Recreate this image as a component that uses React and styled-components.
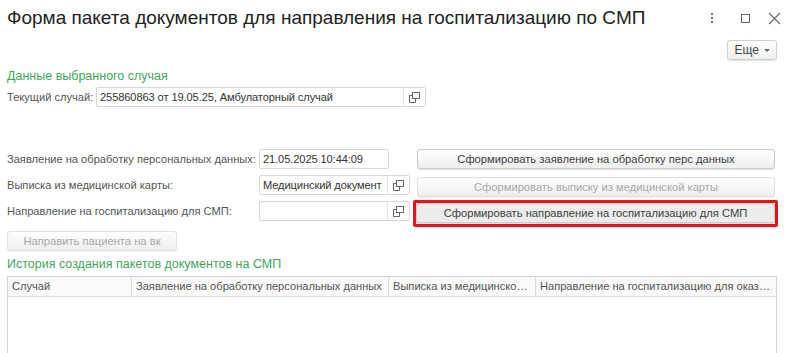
import React from 'react'
import styled, { createGlobalStyle } from 'styled-components'

const GlobalStyle = createGlobalStyle`
  html, body {
    margin: 0;
    padding: 0;
    background: #fff;
  }
  body {
    font-family: "Liberation Sans", Arial, sans-serif;
    font-size: 11.1px;
    color: #404040;
  }
`;

const Page = styled.div`
  width: 793px;
  height: 353px;
  overflow: hidden;
  box-sizing: border-box;
  padding: 0 16px 0 7px;
`;

const TitleBar = styled.div`
  display: flex;
  align-items: center;
  height: 36px;
`;

const Title = styled.h1`
  flex: 1;
  margin: 0;
  font-weight: normal;
  font-size: 19px;
  color: #222;
  white-space: nowrap;
`;

const WindowControls = styled.div`
  display: flex;
  align-items: center;
  color: #555;
  margin-right: -4px;
`;

const Ctrl = styled.span`
  display: flex;
  margin-left: ${p => p.$ml || 0}px;
`;

const CmdBar = styled.div`
  display: flex;
  justify-content: flex-end;
  height: 24px;
  align-items: flex-end;
`;

const MoreButton = styled.button`
  font-family: inherit;
  font-size: 12px;
  color: #444;
  height: 20px;
  padding: 0 6px 0 7px;
  border: 1px solid #cfcfcf;
  border-radius: 3px;
  background: linear-gradient(#fff, #efefef);
  box-shadow: 0 1px 1px rgba(0,0,0,0.12);
  display: flex;
  align-items: center;
  gap: 5px;
`;

const Caret = styled.span`
  width: 0;
  height: 0;
  border-left: 3px solid transparent;
  border-right: 3px solid transparent;
  border-top: 3px solid #666;
`;

const GroupTitle = styled.div`
  color: #3ea85a;
  font-size: 12.5px;
  margin-top: ${p => p.$top || 0}px;
  line-height: 18px;
`;

const FieldRow = styled.div`
  display: flex;
  align-items: center;
  height: 20px;
  margin-top: ${p => p.$top || 2}px;
`;

const Label = styled.span`
  color: #555;
  white-space: nowrap;
  width: ${p => (p.$w ? `${p.$w}px` : 'auto')};
  line-height: 20px;
`;

const Input = styled.div`
  box-sizing: border-box;
  height: 20px;
  width: ${p => p.$w}px;
  border: 1px solid #d8d8d8;
  border-radius: 2px;
  display: flex;
  align-items: stretch;
  background: #fff;
`;

const InputText = styled.span`
  flex: 1;
  padding: 0 3px;
  color: #333;
  letter-spacing: -0.1px;
  white-space: nowrap;
  overflow: hidden;
  line-height: 18px;
`;

const OpenBtn = styled.span`
  width: 21px;
  flex: none;
  border-left: 1px solid #e2e2e2;
  display: flex;
  align-items: center;
  justify-content: center;
`;

const Grid = styled.div`
  display: grid;
  grid-template-columns: 252px 158px 358px;
  grid-auto-rows: 20px;
  row-gap: 6px;
  margin-top: 42px;
  align-items: start;
`;

const Cmd = styled.button`
  box-sizing: border-box;
  font-family: inherit;
  font-size: 11.2px;
  height: 20px;
  width: ${p => (p.$w ? `${p.$w}px` : '100%')};
  border: 1px solid ${p => (p.$disabled ? '#e0e0e0' : '#cdcdcd')};
  border-radius: 3px;
  color: ${p => (p.$disabled ? '#a8a8a8' : '#404040')};
  background: ${p => (p.$pressed ? '#ececec' : 'linear-gradient(#fff, #eeeeee)')};
  box-shadow: 0 1px 1px rgba(0,0,0,${p => (p.$disabled ? 0.06 : 0.14)});
  padding: 0;
  white-space: nowrap;
  margin-top: ${p => p.$top || 0}px;
`;

const Highlight = styled.div`
  margin: -1px -3px 0 -4px;
  height: 21px;
  border: 3px solid #e8131b;
  border-radius: 2px;
  display: flex;
`;

const Table = styled.div`
  margin-top: 3px;
  border: 1px solid #d5d5d5;
  height: 100px;
  width: 770px;
  box-sizing: border-box;
`;

const HeadRow = styled.div`
  display: grid;
  grid-template-columns: 123px 257px 147px 1fr;
  height: 19px;
  border-bottom: 1px solid #dcdcdc;
  background: #f9f9f9;
`;

const HeadCell = styled.div`
  padding: 0 4px;
  line-height: 19px;
  color: #555;
  white-space: nowrap;
  overflow: hidden;
  text-overflow: ellipsis;
  border-left: ${p => (p.$first ? 'none' : '1px solid #dcdcdc')};
`;

const OpenIcon = () => (
  <svg width="11" height="11" viewBox="0 0 11 11" fill="none" stroke="#666" strokeWidth="1">
    <rect x="3.5" y="0.5" width="7" height="6" />
    <path d="M3.5 3.5H0.5V10.5H6.5V6.5" />
  </svg>
);

function App() {
  return (
    <Page>
      <GlobalStyle />
      <TitleBar>
        <Title>Форма пакета документов для направления на госпитализацию по СМП</Title>
        <WindowControls>
          <Ctrl>
            <svg width="4" height="12" viewBox="0 0 4 12">
              <circle cx="2" cy="2" r="1.2" fill="#777" />
              <circle cx="2" cy="6" r="1.2" fill="#777" />
              <circle cx="2" cy="10" r="1.2" fill="#777" />
            </svg>
          </Ctrl>
          <Ctrl $ml={26}>
            <svg width="11" height="11" viewBox="0 0 11 11">
              <rect x="1.5" y="1.5" width="8" height="8" fill="none" stroke="#666" />
            </svg>
          </Ctrl>
          <Ctrl $ml={17}>
            <svg width="13" height="13" viewBox="0 0 13 13">
              <path d="M1 1L12 12M12 1L1 12" stroke="#666" strokeWidth="1.1" />
            </svg>
          </Ctrl>
        </WindowControls>
      </TitleBar>
      <CmdBar>
        <MoreButton>Еще <Caret /></MoreButton>
      </CmdBar>
      <GroupTitle $top={7}>Данные выбранного случая</GroupTitle>
      <FieldRow>
        <Label $w={89}>Текущий случай:</Label>
        <Input $w={330}>
          <InputText>255860863 от 19.05.25, Амбулаторный случай</InputText>
          <OpenBtn><OpenIcon /></OpenBtn>
        </Input>
      </FieldRow>

      <Grid>
        <Label>Заявление на обработку персональных данных:</Label>
        <Input $w={130}>
          <InputText>21.05.2025 10:44:09</InputText>
        </Input>
        <Cmd>Сформировать заявление на обработку перс данных</Cmd>

        <Label>Выписка из медицинской карты:</Label>
        <Input $w={151}>
          <InputText>Медицинский документ</InputText>
          <OpenBtn><OpenIcon /></OpenBtn>
        </Input>
        <Cmd $disabled $top={2}>Сформировать выписку из медицинской карты</Cmd>

        <Label>Направление на госпитализацию для СМП:</Label>
        <Input $w={151}>
          <InputText />
          <OpenBtn><OpenIcon /></OpenBtn>
        </Input>
        <Highlight>
          <Cmd $pressed>Сформировать направление на госпитализацию для СМП</Cmd>
        </Highlight>
      </Grid>

      <FieldRow $top={10}>
        <Cmd $disabled $w={170}>Направить пациента на вк</Cmd>
      </FieldRow>
      <GroupTitle $top={4}>История создания пакетов документов на СМП</GroupTitle>
      <Table>
        <HeadRow>
          <HeadCell $first>Случай</HeadCell>
          <HeadCell>Заявление на обработку персональных данных</HeadCell>
          <HeadCell>Выписка из медицинской карты</HeadCell>
          <HeadCell>Направление на госпитализацию для оказания СМП</HeadCell>
        </HeadRow>
      </Table>
    </Page>
  )
}

export default App
